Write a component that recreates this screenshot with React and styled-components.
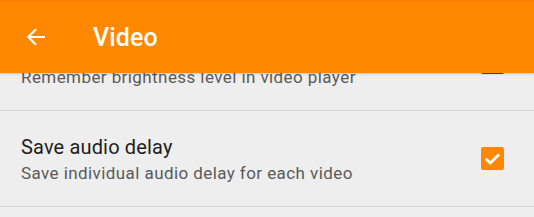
import React from 'react';
import styled, { createGlobalStyle } from 'styled-components';

const GlobalStyle = createGlobalStyle`
  html, body {
    margin: 0;
    padding: 0;
    background: #eeeeee;
    font-family: Roboto, "Noto Sans", sans-serif;
  }
`;

const Screen = styled.div`
  width: 534px;
  height: 217px;
  display: flex;
  flex-direction: column;
  overflow: hidden;
  background: #eeeeee;
`;

const Toolbar = styled.header`
  position: relative;
  z-index: 2;
  height: 72px;
  flex: none;
  display: flex;
  align-items: center;
  background: #ff8800;
  border-top: 1px solid #ff7b00;
  box-shadow: 0 1px 2px rgba(0, 0, 0, 0.18);
`;

const BackButton = styled.button`
  width: 74px;
  height: 100%;
  padding: 0 0 0 26px;
  border: 0;
  background: none;
  display: flex;
  align-items: center;
  cursor: pointer;
`;

const Title = styled.h1`
  margin: 0 0 0 19px;
  font-size: 25px;
  font-weight: 500;
  color: #ffffff;
  letter-spacing: 0.1px;
`;

const Viewport = styled.div`
  flex: 1;
  overflow: hidden;
`;

const List = styled.ul`
  list-style: none;
  margin: ${p => -p.offset}px 0 0;
  padding: 0;
`;

const Row = styled.li`
  height: 95px;
  display: flex;
  align-items: center;
  padding: 0 30px 0 21px;
  border-bottom: 1px solid #d6d6d6;
`;

const Texts = styled.div`
  flex: 1;
  display: flex;
  flex-direction: column;
  gap: 4px;
`;

const RowTitle = styled.span`
  font-size: 20px;
  color: #1e1e1e;
  letter-spacing: 0.15px;
`;

const RowSubtitle = styled.span`
  font-size: 17px;
  color: #5a5a5a;
  letter-spacing: 0.42px;
`;

const Box = styled.span`
  width: 23px;
  height: 23px;
  box-sizing: border-box;
  border-radius: 2px;
  display: flex;
  align-items: center;
  justify-content: center;
  background: ${p => (p.checked ? '#ff8800' : 'transparent')};
  border: ${p => (p.checked ? 'none' : '2px solid #3d4f58')};
`;

const ArrowIcon = () => (
  <svg width="20" height="20" viewBox="0 0 20 20" fill="none">
    <path d="M19 10H2.5M10 2.2L2.2 10l7.8 7.8" stroke="#fff" strokeWidth="2.2" />
  </svg>
);

const Check = ({ checked }) => (
  <Box checked={checked}>
    {checked && (
      <svg width="23" height="23" viewBox="0 0 23 23" fill="none">
        <path d="M4.8 11.8l4.4 4.2 8.8-8.6" stroke="#fff" strokeWidth="2.8" />
      </svg>
    )}
  </Box>
);

const settings = [
  {
    title: 'Save brightness level',
    subtitle: 'Remember brightness level in video player',
    checked: false,
  },
  {
    title: 'Save audio delay',
    subtitle: 'Save individual audio delay for each video',
    checked: true,
  },
];

export default function App() {
  return (
    <Screen>
      <GlobalStyle />
      <Toolbar>
        <BackButton aria-label="Back">
          <ArrowIcon />
        </BackButton>
        <Title>Video</Title>
      </Toolbar>
      <Viewport>
        <List offset={58}>
          {settings.map(s => (
            <Row key={s.title}>
              <Texts>
                <RowTitle>{s.title}</RowTitle>
                <RowSubtitle>{s.subtitle}</RowSubtitle>
              </Texts>
              <Check checked={s.checked} />
            </Row>
          ))}
        </List>
      </Viewport>
    </Screen>
  );
}
